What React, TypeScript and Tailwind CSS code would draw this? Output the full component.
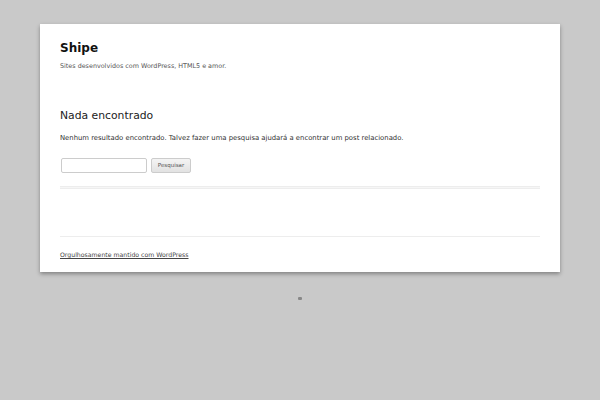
export default function App() {
  return (
    <div
      className="min-h-[400px] w-[600px] bg-[#c9c9c9] pt-[24px]"
      style={{ fontFamily: '"DejaVu Sans", sans-serif' }}
    >
      <div className="mx-auto w-[520px] bg-white px-[20px] shadow-[0_2px_4px_rgba(0,0,0,0.35)]">
        <header className="pt-[17px]">
          <h1 className="text-[12px] font-bold leading-[15px] text-[#111]">Shipe</h1>
          <p className="mt-[6px] text-[6.4px] leading-[9px] text-[#555]">
            Sites desenvolvidos com WordPress, HTML5 e amor.
          </p>
        </header>

        <main className="pt-[38px]">
          <h2 className="text-[10.8px] leading-[13px] text-[#222]">Nada encontrado</h2>
          <p className="mt-[11px] text-[6.85px] leading-[10px] text-[#333]">
            Nenhum resultado encontrado. Talvez fazer uma pesquisa ajudará a encontrar um post relacionado.
          </p>
          <form className="mt-[15px] flex items-center gap-[4px] pl-[1px]" onSubmit={e => e.preventDefault()}>
            <input
              type="text"
              className="h-[15px] w-[86px] rounded-[2px] border border-[#ccc] bg-white outline-none"
            />
            <button
              type="submit"
              className="h-[15px] w-[40px] rounded-[2px] border border-[#ccc] bg-gradient-to-b from-[#f4f4f4] to-[#e2e2e2] text-[5.5px] leading-[13px] text-[#555]"
            >
              Pesquisar
            </button>
          </form>
          <div className="mt-[13px] h-[3px] border-y border-[#ededed] bg-[#f6f6f6]" />
        </main>

        <footer className="mt-[47px] border-t border-[#ededed] pt-[13px] pb-[13px]">
          <a href="#" className="block text-[6.2px] leading-[9px] text-[#444] underline">
            Orgulhosamente mantido com WordPress
          </a>
        </footer>
      </div>
      <div className="mx-auto mt-[25px] h-[3px] w-[4px] rounded-[1px] bg-[#888]" />
    </div>
  )
}
